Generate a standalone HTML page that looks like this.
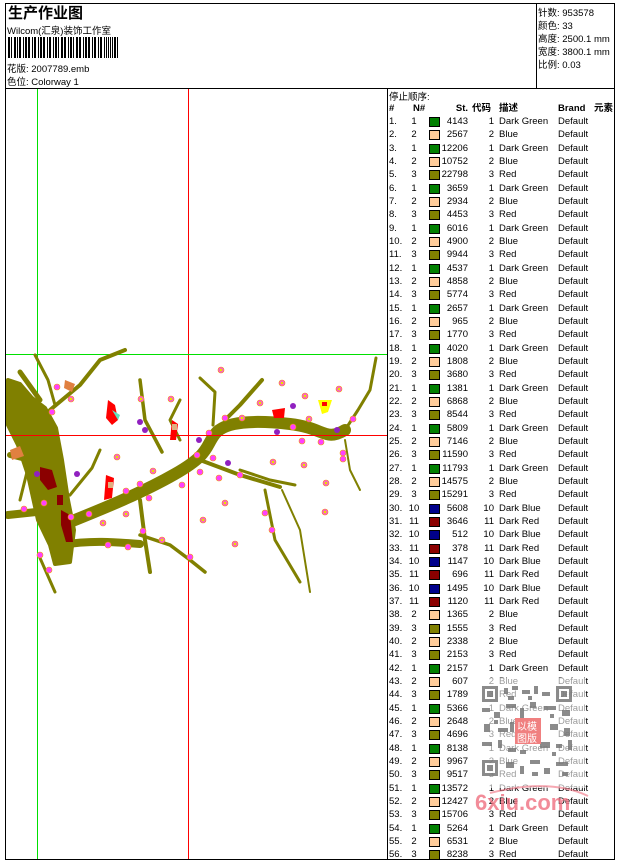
<!DOCTYPE html>
<html><head><meta charset="utf-8"><style>
*{margin:0;padding:0;box-sizing:border-box}
body{width:620px;height:861px;background:#fff;position:relative;overflow:hidden;font-family:"Liberation Sans","Noto Sans CJK SC",sans-serif;font-size:9.5px;color:#000}
.a{position:absolute;white-space:nowrap}
.ln{position:absolute;background:#000}
.r{position:absolute;left:388px;width:227px;height:13.3px;line-height:13.3px}
.r span{position:absolute}
.c1{left:1px}.c2{left:20px;width:12px;text-align:center}
.sw{left:41px;top:2px;width:11px;height:10px;border:1px solid #000}
.c3{right:147px;text-align:right}.c4{right:121px;text-align:right}
.c5{left:111px}.c6{left:170px}
.g{background:#008000}.p{background:#fc9}.o{background:#808000}.b{background:#00008b}.m{background:#8b0000}
</style></head><body>
<div class="ln" style="left:5px;top:3px;width:610px;height:1px"></div>
<div class="ln" style="left:5px;top:859px;width:610px;height:1px"></div>
<div class="ln" style="left:5px;top:3px;width:1px;height:857px"></div>
<div class="ln" style="left:614px;top:3px;width:1px;height:857px"></div>
<div class="ln" style="left:536px;top:3px;width:1px;height:85px"></div>
<div class="ln" style="left:5px;top:88px;width:610px;height:1px"></div>
<div class="ln" style="left:387px;top:88px;width:1px;height:772px"></div>

<div class="a" style="left:8px;top:2px;font-size:15px;font-weight:bold">生产作业图</div>
<div class="a" style="left:7px;top:23px">Wilcom(汇泉)装饰工作室</div>
<svg class="a" style="left:8px;top:37px" width="110" height="21">
<g fill="#000">
<rect x="0" y="0" width="2" height="21"/><rect x="3" y="0" width="1" height="21"/><rect x="6" y="0" width="2" height="21"/><rect x="9" y="0" width="1" height="21"/><rect x="11" y="0" width="2" height="21"/><rect x="15" y="0" width="1" height="21"/><rect x="17" y="0" width="2" height="21"/><rect x="20" y="0" width="2" height="21"/><rect x="24" y="0" width="1" height="21"/><rect x="26" y="0" width="2" height="21"/><rect x="30" y="0" width="1" height="21"/><rect x="32" y="0" width="2" height="21"/><rect x="35" y="0" width="2" height="21"/><rect x="39" y="0" width="1" height="21"/><rect x="41" y="0" width="2" height="21"/><rect x="45" y="0" width="1" height="21"/><rect x="47" y="0" width="2" height="21"/><rect x="50" y="0" width="1" height="21"/><rect x="53" y="0" width="2" height="21"/><rect x="56" y="0" width="2" height="21"/><rect x="60" y="0" width="1" height="21"/><rect x="62" y="0" width="2" height="21"/><rect x="65" y="0" width="1" height="21"/><rect x="68" y="0" width="2" height="21"/><rect x="71" y="0" width="2" height="21"/><rect x="75" y="0" width="1" height="21"/><rect x="77" y="0" width="2" height="21"/><rect x="80" y="0" width="2" height="21"/><rect x="84" y="0" width="1" height="21"/><rect x="86" y="0" width="2" height="21"/><rect x="90" y="0" width="1" height="21"/><rect x="92" y="0" width="2" height="21"/><rect x="96" y="0" width="1" height="21"/><rect x="98" y="0" width="1" height="21"/><rect x="100" y="0" width="1" height="21"/><rect x="102" y="0" width="1" height="21"/><rect x="104" y="0" width="1" height="21"/><rect x="106" y="0" width="2" height="21"/><rect x="109" y="0" width="1" height="21"/>
</g></svg>
<div class="a" style="left:7px;top:61px">花版: 2007789.emb</div>
<div class="a" style="left:7px;top:74px">色位: Colorway 1</div>

<div class="a" style="left:538px;top:5px">针数: 953578</div>
<div class="a" style="left:538px;top:18px">颜色: 33</div>
<div class="a" style="left:538px;top:31px">高度: 2500.1 mm</div>
<div class="a" style="left:538px;top:44px">宽度: 3800.1 mm</div>
<div class="a" style="left:538px;top:57px">比例: 0.03</div>

<svg class="a" style="left:6px;top:89px" width="381" height="770" viewBox="6 89 381 770">
<line x1="37.5" y1="89" x2="37.5" y2="859" stroke="#00e000" stroke-width="1"/>
<line x1="188.5" y1="89" x2="188.5" y2="859" stroke="#f00" stroke-width="1"/>
<line x1="6" y1="354.5" x2="387" y2="354.5" stroke="#00e000" stroke-width="1"/>
<g fill="none" stroke="#808000" stroke-linecap="round" stroke-linejoin="round">
<path d="M8,380 L20,384 L32,398 L45,408 L56,428 L62,460 L68,500 L74,530 L70,562 L55,564 L50,545 L38,520 L28,475 L18,445 L8,425 Z" fill="#808000" stroke-width="4"/>
<path d="M55,528 C100,510 140,494 175,474 S205,447 215,434 S255,420 290,424 S325,442 345,430" stroke-width="12"/>
<path d="M110,505 C140,495 170,480 190,465" stroke-width="8"/>
<path d="M62,545 C90,540 115,542 140,544" stroke-width="8"/>
<path d="M8,515 L55,510" stroke-width="8"/>
<path d="M35,355 L48,380 L55,405" stroke-width="3"/>
<path d="M50,410 L80,385 L100,360 L125,350" stroke-width="4"/>
<path d="M140,380 L145,420 L162,452" stroke-width="3.5"/>
<path d="M200,378 L215,392 L213,425" stroke-width="3"/>
<path d="M262,380 L240,405 L225,420" stroke-width="4"/>
<path d="M345,430 L358,410 L370,390 L376,358" stroke-width="3"/>
<path d="M345,440 L350,470 L360,490" stroke-width="2"/>
<path d="M200,460 L240,475 L280,487" stroke-width="4"/>
<path d="M265,490 L275,540 L300,582" stroke-width="3"/>
<path d="M282,490 L300,530 L310,592" stroke-width="2"/>
<path d="M140,500 L145,540 L150,572" stroke-width="4"/>
<path d="M140,535 L170,545 L190,560 L205,572" stroke-width="3.5"/>
<path d="M40,558 L55,592" stroke-width="3"/>
<path d="M30,460 L20,500" stroke-width="3"/>
<path d="M70,495 L92,468 L100,450" stroke-width="3"/>
<path d="M20,372 L40,400" stroke-width="5"/>
<path d="M180,440 L170,420 L180,400" stroke-width="3"/>
<path d="M30,460 L10,455" stroke-width="6"/>
<path d="M240,470 L270,480 L295,485" stroke-width="3"/>
</g>
<g fill="#8b0000"><path d="M40,467 L52,470 L57,487 L48,490 L40,480Z"/><rect x="57" y="495" width="6" height="10"/><path d="M61,510 L70,515 L73,542 L66,542 L61,525Z"/></g>
<g fill="#ff40ff" stroke="#f0a000" stroke-width="0.6"><circle cx="221" cy="370" r="3"/><circle cx="282" cy="383" r="3"/><circle cx="339" cy="389" r="3"/><circle cx="305" cy="396" r="3"/><circle cx="171" cy="399" r="3"/><circle cx="141" cy="399" r="3"/><circle cx="71" cy="399" r="3"/><circle cx="57" cy="387" r="3"/><circle cx="52" cy="412" r="3"/><circle cx="260" cy="403" r="3"/><circle cx="242" cy="418" r="3"/><circle cx="309" cy="419" r="3"/><circle cx="225" cy="418" r="3"/><circle cx="293" cy="427" r="3"/><circle cx="209" cy="433" r="3"/><circle cx="353" cy="419" r="3"/><circle cx="321" cy="442" r="3"/><circle cx="302" cy="441" r="3"/><circle cx="343" cy="453" r="3"/><circle cx="343" cy="459" r="3"/><circle cx="117" cy="457" r="3"/><circle cx="197" cy="455" r="3"/><circle cx="213" cy="458" r="3"/><circle cx="273" cy="462" r="3"/><circle cx="304" cy="465" r="3"/><circle cx="153" cy="471" r="3"/><circle cx="200" cy="472" r="3"/><circle cx="240" cy="475" r="3"/><circle cx="219" cy="478" r="3"/><circle cx="326" cy="483" r="3"/><circle cx="182" cy="485" r="3"/><circle cx="140" cy="484" r="3"/><circle cx="126" cy="491" r="3"/><circle cx="149" cy="498" r="3"/><circle cx="225" cy="503" r="3"/><circle cx="44" cy="503" r="3"/><circle cx="24" cy="509" r="3"/><circle cx="325" cy="512" r="3"/><circle cx="265" cy="513" r="3"/><circle cx="89" cy="514" r="3"/><circle cx="126" cy="514" r="3"/><circle cx="71" cy="517" r="3"/><circle cx="203" cy="520" r="3"/><circle cx="103" cy="523" r="3"/><circle cx="272" cy="530" r="3"/><circle cx="143" cy="531" r="3"/><circle cx="162" cy="540" r="3"/><circle cx="235" cy="544" r="3"/><circle cx="128" cy="547" r="3"/><circle cx="108" cy="545" r="3"/><circle cx="190" cy="557" r="3"/><circle cx="40" cy="555" r="3"/><circle cx="49" cy="570" r="3"/></g>
<g fill="#e8e000"><circle cx="221" cy="370" r="1.5"/><circle cx="282" cy="383" r="1.5"/><circle cx="339" cy="389" r="1.5"/><circle cx="305" cy="396" r="1.5"/><circle cx="171" cy="399" r="1.5"/><circle cx="141" cy="399" r="1.5"/><circle cx="71" cy="399" r="1.5"/><circle cx="260" cy="403" r="1.5"/><circle cx="242" cy="418" r="1.5"/><circle cx="309" cy="419" r="1.5"/><circle cx="117" cy="457" r="1.5"/><circle cx="273" cy="462" r="1.5"/><circle cx="304" cy="465" r="1.5"/><circle cx="326" cy="483" r="1.5"/><circle cx="225" cy="503" r="1.5"/><circle cx="325" cy="512" r="1.5"/><circle cx="203" cy="520" r="1.5"/><circle cx="235" cy="544" r="1.5"/><circle cx="162" cy="540" r="1.5"/><circle cx="103" cy="523" r="1.5"/><circle cx="153" cy="471" r="1.5"/><circle cx="126" cy="514" r="1.5"/></g>
<g fill="#9020c0"><circle cx="140" cy="422" r="3"/><circle cx="145" cy="430" r="3"/><circle cx="199" cy="440" r="3"/><circle cx="228" cy="463" r="3"/><circle cx="277" cy="432" r="3"/><circle cx="293" cy="406" r="3"/><circle cx="337" cy="430" r="3"/><circle cx="77" cy="474" r="3"/><circle cx="37" cy="474" r="3"/></g>
<g>
<path d="M108,400 L115,405 L118,420 L112,425 L106,418Z" fill="#f00"/><path d="M112,410 L120,415 L118,420 Z" fill="#60e0c0"/>
<path d="M172,420 L178,424 L176,440 L170,440Z" fill="#f00"/><rect x="172" y="424" width="5" height="6" fill="#e0b080"/>
<path d="M106,475 L114,478 L112,498 L104,500Z" fill="#f00"/><rect x="108" y="482" width="5" height="6" fill="#e0b080"/>
<path d="M272,410 L285,408 L284,418 L274,418Z" fill="#f00"/>
<path d="M318,400 L332,400 L328,412 L322,414Z" fill="#ff0"/><rect x="322" y="402" width="5" height="4" fill="#f00"/>
<path d="M65,380 L75,384 L72,392 L64,388Z" fill="#e08040"/>
<path d="M10,450 L20,446 L24,456 L12,460Z" fill="#e08040"/>
</g>
<line x1="6" y1="435.5" x2="387" y2="435.5" stroke="#f00" stroke-width="1"/>
</svg>

<div class="a" style="left:389px;top:89px">停止顺序:</div>
<div class="r" style="top:102px;font-weight:bold;text-decoration:underline"><span class="c1">#</span><span style="left:25px">N#</span><span class="c3">St.</span><span style="left:84px">代码</span><span class="c5">描述</span><span class="c6">Brand</span><span style="left:206px">元素</span></div>
<div style="position:absolute;left:0;top:115px">
<div class="r" style="top:0px"><span class="c1">1.</span><span class="c2">1</span><span class="sw g"></span><span class="c3">4143</span><span class="c4">1</span><span class="c5">Dark Green</span><span class="c6">Default</span></div>
<div class="r" style="top:13.33px"><span class="c1">2.</span><span class="c2">2</span><span class="sw p"></span><span class="c3">2567</span><span class="c4">2</span><span class="c5">Blue</span><span class="c6">Default</span></div>
<div class="r" style="top:26.66px"><span class="c1">3.</span><span class="c2">1</span><span class="sw g"></span><span class="c3">12206</span><span class="c4">1</span><span class="c5">Dark Green</span><span class="c6">Default</span></div>
<div class="r" style="top:40px"><span class="c1">4.</span><span class="c2">2</span><span class="sw p"></span><span class="c3">10752</span><span class="c4">2</span><span class="c5">Blue</span><span class="c6">Default</span></div>
<div class="r" style="top:53.33px"><span class="c1">5.</span><span class="c2">3</span><span class="sw o"></span><span class="c3">22798</span><span class="c4">3</span><span class="c5">Red</span><span class="c6">Default</span></div>
<div class="r" style="top:66.66px"><span class="c1">6.</span><span class="c2">1</span><span class="sw g"></span><span class="c3">3659</span><span class="c4">1</span><span class="c5">Dark Green</span><span class="c6">Default</span></div>
<div class="r" style="top:80px"><span class="c1">7.</span><span class="c2">2</span><span class="sw p"></span><span class="c3">2934</span><span class="c4">2</span><span class="c5">Blue</span><span class="c6">Default</span></div>
<div class="r" style="top:93.33px"><span class="c1">8.</span><span class="c2">3</span><span class="sw o"></span><span class="c3">4453</span><span class="c4">3</span><span class="c5">Red</span><span class="c6">Default</span></div>
<div class="r" style="top:106.66px"><span class="c1">9.</span><span class="c2">1</span><span class="sw g"></span><span class="c3">6016</span><span class="c4">1</span><span class="c5">Dark Green</span><span class="c6">Default</span></div>
<div class="r" style="top:120px"><span class="c1">10.</span><span class="c2">2</span><span class="sw p"></span><span class="c3">4900</span><span class="c4">2</span><span class="c5">Blue</span><span class="c6">Default</span></div>
<div class="r" style="top:133.33px"><span class="c1">11.</span><span class="c2">3</span><span class="sw o"></span><span class="c3">9944</span><span class="c4">3</span><span class="c5">Red</span><span class="c6">Default</span></div>
<div class="r" style="top:146.66px"><span class="c1">12.</span><span class="c2">1</span><span class="sw g"></span><span class="c3">4537</span><span class="c4">1</span><span class="c5">Dark Green</span><span class="c6">Default</span></div>
<div class="r" style="top:160px"><span class="c1">13.</span><span class="c2">2</span><span class="sw p"></span><span class="c3">4858</span><span class="c4">2</span><span class="c5">Blue</span><span class="c6">Default</span></div>
<div class="r" style="top:173.33px"><span class="c1">14.</span><span class="c2">3</span><span class="sw o"></span><span class="c3">5774</span><span class="c4">3</span><span class="c5">Red</span><span class="c6">Default</span></div>
<div class="r" style="top:186.66px"><span class="c1">15.</span><span class="c2">1</span><span class="sw g"></span><span class="c3">2657</span><span class="c4">1</span><span class="c5">Dark Green</span><span class="c6">Default</span></div>
<div class="r" style="top:200px"><span class="c1">16.</span><span class="c2">2</span><span class="sw p"></span><span class="c3">965</span><span class="c4">2</span><span class="c5">Blue</span><span class="c6">Default</span></div>
<div class="r" style="top:213.33px"><span class="c1">17.</span><span class="c2">3</span><span class="sw o"></span><span class="c3">1770</span><span class="c4">3</span><span class="c5">Red</span><span class="c6">Default</span></div>
<div class="r" style="top:226.66px"><span class="c1">18.</span><span class="c2">1</span><span class="sw g"></span><span class="c3">4020</span><span class="c4">1</span><span class="c5">Dark Green</span><span class="c6">Default</span></div>
<div class="r" style="top:240px"><span class="c1">19.</span><span class="c2">2</span><span class="sw p"></span><span class="c3">1808</span><span class="c4">2</span><span class="c5">Blue</span><span class="c6">Default</span></div>
<div class="r" style="top:253.33px"><span class="c1">20.</span><span class="c2">3</span><span class="sw o"></span><span class="c3">3680</span><span class="c4">3</span><span class="c5">Red</span><span class="c6">Default</span></div>
<div class="r" style="top:266.66px"><span class="c1">21.</span><span class="c2">1</span><span class="sw g"></span><span class="c3">1381</span><span class="c4">1</span><span class="c5">Dark Green</span><span class="c6">Default</span></div>
<div class="r" style="top:280px"><span class="c1">22.</span><span class="c2">2</span><span class="sw p"></span><span class="c3">6868</span><span class="c4">2</span><span class="c5">Blue</span><span class="c6">Default</span></div>
<div class="r" style="top:293.33px"><span class="c1">23.</span><span class="c2">3</span><span class="sw o"></span><span class="c3">8544</span><span class="c4">3</span><span class="c5">Red</span><span class="c6">Default</span></div>
<div class="r" style="top:306.66px"><span class="c1">24.</span><span class="c2">1</span><span class="sw g"></span><span class="c3">5809</span><span class="c4">1</span><span class="c5">Dark Green</span><span class="c6">Default</span></div>
<div class="r" style="top:320px"><span class="c1">25.</span><span class="c2">2</span><span class="sw p"></span><span class="c3">7146</span><span class="c4">2</span><span class="c5">Blue</span><span class="c6">Default</span></div>
<div class="r" style="top:333.33px"><span class="c1">26.</span><span class="c2">3</span><span class="sw o"></span><span class="c3">11590</span><span class="c4">3</span><span class="c5">Red</span><span class="c6">Default</span></div>
<div class="r" style="top:346.66px"><span class="c1">27.</span><span class="c2">1</span><span class="sw g"></span><span class="c3">11793</span><span class="c4">1</span><span class="c5">Dark Green</span><span class="c6">Default</span></div>
<div class="r" style="top:360px"><span class="c1">28.</span><span class="c2">2</span><span class="sw p"></span><span class="c3">14575</span><span class="c4">2</span><span class="c5">Blue</span><span class="c6">Default</span></div>
<div class="r" style="top:373.33px"><span class="c1">29.</span><span class="c2">3</span><span class="sw o"></span><span class="c3">15291</span><span class="c4">3</span><span class="c5">Red</span><span class="c6">Default</span></div>
<div class="r" style="top:386.66px"><span class="c1">30.</span><span class="c2">10</span><span class="sw b"></span><span class="c3">5608</span><span class="c4">10</span><span class="c5">Dark Blue</span><span class="c6">Default</span></div>
<div class="r" style="top:400px"><span class="c1">31.</span><span class="c2">11</span><span class="sw m"></span><span class="c3">3646</span><span class="c4">11</span><span class="c5">Dark Red</span><span class="c6">Default</span></div>
<div class="r" style="top:413.33px"><span class="c1">32.</span><span class="c2">10</span><span class="sw b"></span><span class="c3">512</span><span class="c4">10</span><span class="c5">Dark Blue</span><span class="c6">Default</span></div>
<div class="r" style="top:426.66px"><span class="c1">33.</span><span class="c2">11</span><span class="sw m"></span><span class="c3">378</span><span class="c4">11</span><span class="c5">Dark Red</span><span class="c6">Default</span></div>
<div class="r" style="top:440px"><span class="c1">34.</span><span class="c2">10</span><span class="sw b"></span><span class="c3">1147</span><span class="c4">10</span><span class="c5">Dark Blue</span><span class="c6">Default</span></div>
<div class="r" style="top:453.33px"><span class="c1">35.</span><span class="c2">11</span><span class="sw m"></span><span class="c3">696</span><span class="c4">11</span><span class="c5">Dark Red</span><span class="c6">Default</span></div>
<div class="r" style="top:466.66px"><span class="c1">36.</span><span class="c2">10</span><span class="sw b"></span><span class="c3">1495</span><span class="c4">10</span><span class="c5">Dark Blue</span><span class="c6">Default</span></div>
<div class="r" style="top:480px"><span class="c1">37.</span><span class="c2">11</span><span class="sw m"></span><span class="c3">1120</span><span class="c4">11</span><span class="c5">Dark Red</span><span class="c6">Default</span></div>
<div class="r" style="top:493.33px"><span class="c1">38.</span><span class="c2">2</span><span class="sw p"></span><span class="c3">1365</span><span class="c4">2</span><span class="c5">Blue</span><span class="c6">Default</span></div>
<div class="r" style="top:506.66px"><span class="c1">39.</span><span class="c2">3</span><span class="sw o"></span><span class="c3">1555</span><span class="c4">3</span><span class="c5">Red</span><span class="c6">Default</span></div>
<div class="r" style="top:520px"><span class="c1">40.</span><span class="c2">2</span><span class="sw p"></span><span class="c3">2338</span><span class="c4">2</span><span class="c5">Blue</span><span class="c6">Default</span></div>
<div class="r" style="top:533.33px"><span class="c1">41.</span><span class="c2">3</span><span class="sw o"></span><span class="c3">2153</span><span class="c4">3</span><span class="c5">Red</span><span class="c6">Default</span></div>
<div class="r" style="top:546.66px"><span class="c1">42.</span><span class="c2">1</span><span class="sw g"></span><span class="c3">2157</span><span class="c4">1</span><span class="c5">Dark Green</span><span class="c6">Default</span></div>
<div class="r" style="top:560px"><span class="c1">43.</span><span class="c2">2</span><span class="sw p"></span><span class="c3">607</span><span class="c4">2</span><span class="c5">Blue</span><span class="c6">Default</span></div>
<div class="r" style="top:573.33px"><span class="c1">44.</span><span class="c2">3</span><span class="sw o"></span><span class="c3">1789</span><span class="c4">3</span><span class="c5">Red</span><span class="c6">Default</span></div>
<div class="r" style="top:586.66px"><span class="c1">45.</span><span class="c2">1</span><span class="sw g"></span><span class="c3">5366</span><span class="c4">1</span><span class="c5">Dark Green</span><span class="c6">Default</span></div>
<div class="r" style="top:600px"><span class="c1">46.</span><span class="c2">2</span><span class="sw p"></span><span class="c3">2648</span><span class="c4">2</span><span class="c5">Blue</span><span class="c6">Default</span></div>
<div class="r" style="top:613.33px"><span class="c1">47.</span><span class="c2">3</span><span class="sw o"></span><span class="c3">4696</span><span class="c4">3</span><span class="c5">Red</span><span class="c6">Default</span></div>
<div class="r" style="top:626.66px"><span class="c1">48.</span><span class="c2">1</span><span class="sw g"></span><span class="c3">8138</span><span class="c4">1</span><span class="c5">Dark Green</span><span class="c6">Default</span></div>
<div class="r" style="top:640px"><span class="c1">49.</span><span class="c2">2</span><span class="sw p"></span><span class="c3">9967</span><span class="c4">2</span><span class="c5">Blue</span><span class="c6">Default</span></div>
<div class="r" style="top:653.33px"><span class="c1">50.</span><span class="c2">3</span><span class="sw o"></span><span class="c3">9517</span><span class="c4">3</span><span class="c5">Red</span><span class="c6">Default</span></div>
<div class="r" style="top:666.66px"><span class="c1">51.</span><span class="c2">1</span><span class="sw g"></span><span class="c3">13572</span><span class="c4">1</span><span class="c5">Dark Green</span><span class="c6">Default</span></div>
<div class="r" style="top:680px"><span class="c1">52.</span><span class="c2">2</span><span class="sw p"></span><span class="c3">12427</span><span class="c4">2</span><span class="c5">Blue</span><span class="c6">Default</span></div>
<div class="r" style="top:693.33px"><span class="c1">53.</span><span class="c2">3</span><span class="sw o"></span><span class="c3">15706</span><span class="c4">3</span><span class="c5">Red</span><span class="c6">Default</span></div>
<div class="r" style="top:706.66px"><span class="c1">54.</span><span class="c2">1</span><span class="sw g"></span><span class="c3">5264</span><span class="c4">1</span><span class="c5">Dark Green</span><span class="c6">Default</span></div>
<div class="r" style="top:720px"><span class="c1">55.</span><span class="c2">2</span><span class="sw p"></span><span class="c3">6531</span><span class="c4">2</span><span class="c5">Blue</span><span class="c6">Default</span></div>
<div class="r" style="top:733.33px"><span class="c1">56.</span><span class="c2">3</span><span class="sw o"></span><span class="c3">8238</span><span class="c4">3</span><span class="c5">Red</span><span class="c6">Default</span></div>
</div>

<svg class="a" style="left:470px;top:678px" width="120" height="140">
<rect x="5" y="0" width="110" height="110" fill="#fff" opacity="0.6"/>
<g fill="#777" opacity="0.85">
<rect x="12" y="8" width="16" height="16"/><rect x="15" y="11" width="10" height="10" fill="#fff"/><rect x="17" y="13" width="6" height="6"/>
<rect x="86" y="8" width="16" height="16"/><rect x="89" y="11" width="10" height="10" fill="#fff"/><rect x="91" y="13" width="6" height="6"/>
<rect x="12" y="82" width="16" height="16"/><rect x="15" y="85" width="10" height="10" fill="#fff"/><rect x="17" y="87" width="6" height="6"/>
<rect x="34" y="10" width="4" height="6"/><rect x="42" y="8" width="6" height="4"/><rect x="52" y="12" width="8" height="4"/><rect x="64" y="8" width="4" height="8"/><rect x="72" y="14" width="8" height="4"/><rect x="38" y="18" width="6" height="4"/><rect x="58" y="18" width="4" height="4"/>
<rect x="12" y="30" width="8" height="4"/><rect x="24" y="34" width="6" height="6"/><rect x="36" y="26" width="10" height="4"/><rect x="50" y="30" width="4" height="10"/><rect x="60" y="24" width="6" height="6"/><rect x="74" y="28" width="12" height="4"/><rect x="92" y="32" width="8" height="6"/><rect x="80" y="36" width="4" height="4"/>
<rect x="14" y="46" width="6" height="8"/><rect x="28" y="50" width="10" height="4"/><rect x="40" y="44" width="4" height="10"/><rect x="80" y="46" width="8" height="6"/><rect x="94" y="50" width="6" height="8"/><rect x="24" y="42" width="4" height="4"/>
<rect x="12" y="64" width="10" height="4"/><rect x="28" y="62" width="4" height="8"/><rect x="38" y="70" width="8" height="4"/><rect x="70" y="64" width="10" height="6"/><rect x="86" y="66" width="6" height="4"/><rect x="98" y="62" width="4" height="10"/><rect x="50" y="72" width="6" height="4"/><rect x="82" y="74" width="4" height="4"/>
<rect x="36" y="84" width="8" height="6"/><rect x="50" y="88" width="4" height="8"/><rect x="60" y="82" width="10" height="4"/><rect x="74" y="90" width="6" height="6"/><rect x="86" y="84" width="12" height="4"/><rect x="92" y="94" width="6" height="4"/><rect x="62" y="94" width="6" height="4"/>
</g>
<rect x="45" y="40" width="26" height="26" fill="#f08080"/>
<text x="47" y="52" font-size="10" fill="#fff" font-family="Noto Sans CJK SC,sans-serif">以模</text>
<text x="47" y="64" font-size="10" fill="#fff" font-family="Noto Sans CJK SC,sans-serif">图版</text>
<text x="5" y="132" font-size="22" font-weight="bold" fill="#f07080" opacity="0.8" font-family="Liberation Sans,sans-serif">6xiu.com</text>
<path d="M20,115 Q80,100 118,118" stroke="#f07080" stroke-width="2" fill="none" opacity="0.6"/>
</svg>
</body></html>
